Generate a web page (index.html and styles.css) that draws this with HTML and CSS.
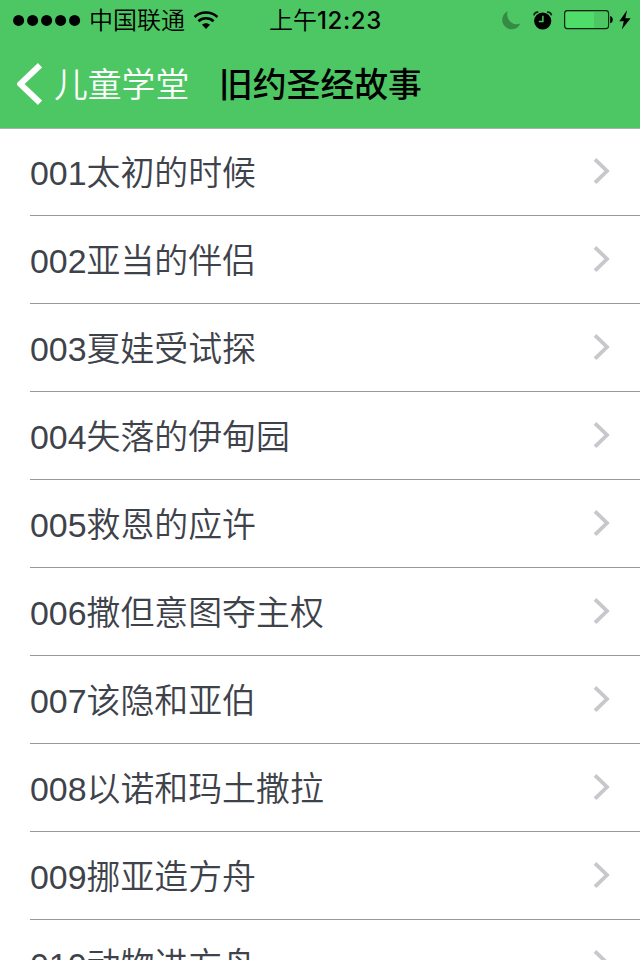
FILE: index.html
```
<!DOCTYPE html>
<html lang="zh-CN">
<head>
    <meta charset="UTF-8">
    <meta name="viewport" content="width=device-width, initial-scale=1.0">
    <title>旧约圣经故事</title>
    <link rel="stylesheet" href="styles.css">
</head>
<body>
    <header class="header">
        <div class="status">
            <div class="carrier">
                <svg class="signal" width="68" height="12" viewBox="0 0 68 12">
                    <circle cx="5.6" cy="6.4" r="5.5"/>
                    <circle cx="19.6" cy="6.4" r="5.5"/>
                    <circle cx="33.6" cy="6.4" r="5.5"/>
                    <circle cx="47.6" cy="6.4" r="5.5"/>
                    <circle cx="61.6" cy="6.4" r="5.5"/>
                </svg>
                <span class="label">中国联通</span>
                <svg class="wifi" width="26" height="18" viewBox="0 0 26 18">
                    <path d="M1.6 6C8 0 18 0 24.4 6M5.4 10.2c4.2-3.9 11-3.9 15.2 0" fill="none" stroke="#000" stroke-width="2.6"/>
                    <path d="M9 13.7c2.4-2 5.6-2 8 0L13 18z"/>
                </svg>
            </div>
            <div class="time label">上午<span class="digits">12:23</span></div>
            <div class="indicators">
                <svg class="moon" width="19" height="19" viewBox="0 0 19 19">
                    <path d="M5.8 0.3A9.4 9.4 0 1 0 18.3 12.5A9.6 9.6 0 0 1 5.8 0.3z"/>
                </svg>
                <svg class="alarm" width="20" height="19" viewBox="0 0 20 19">
                    <circle cx="9.7" cy="10" r="8.6"/>
                    <path d="M1 4.4C1.3 2 3.1 0.9 5.3 1.3M18.4 4.4C18.1 2 16.3 0.9 14.1 1.3" fill="none" stroke="#06240b" stroke-width="1.7"/>
                    <path d="M9.9 4.8v5.8H5.8" fill="none" stroke="#4dc763" stroke-width="1.5"/>
                </svg>
                <svg class="battery" width="50" height="20" viewBox="0 0 50 20">
                    <rect x="2" y="2" width="28" height="16" fill="#50dc68"/>
                    <rect x="0.6" y="0.6" width="44" height="18" rx="2.8" fill="none" stroke="#06240b" stroke-width="1.1"/>
                    <path d="M46.2 6c3.4 0.6 3.4 6.6 0 7.2z"/>
                </svg>
                <svg class="bolt" width="12" height="20" viewBox="0 0 12 20">
                    <path d="M8 0.3L0.3 11.3h4.5L2.8 19.4L11.6 8.2H6.4z"/>
                </svg>
            </div>
        </div>
        <nav class="navbar">
            <a class="back" href="#">
                <svg width="26" height="42" viewBox="0 0 26 42">
                    <path d="M23 2.2L3.2 21L23 39.8" fill="none" stroke="#fff" stroke-width="6"/>
                </svg>
                <span class="label">儿童学堂</span>
            </a>
            <h1 class="title label">旧约圣经故事</h1>
        </nav>
    </header>

    <ul class="list">
        <li><span class="label">001太初的时候</span><svg class="arrow" viewBox="0 0 18 28"><path d="M2 2.3L14 14L2 25.7"/></svg></li>
        <li><span class="label">002亚当的伴侣</span><svg class="arrow" viewBox="0 0 18 28"><path d="M2 2.3L14 14L2 25.7"/></svg></li>
        <li><span class="label">003夏娃受试探</span><svg class="arrow" viewBox="0 0 18 28"><path d="M2 2.3L14 14L2 25.7"/></svg></li>
        <li><span class="label">004失落的伊甸园</span><svg class="arrow" viewBox="0 0 18 28"><path d="M2 2.3L14 14L2 25.7"/></svg></li>
        <li><span class="label">005救恩的应许</span><svg class="arrow" viewBox="0 0 18 28"><path d="M2 2.3L14 14L2 25.7"/></svg></li>
        <li><span class="label">006撒但意图夺主权</span><svg class="arrow" viewBox="0 0 18 28"><path d="M2 2.3L14 14L2 25.7"/></svg></li>
        <li><span class="label">007该隐和亚伯</span><svg class="arrow" viewBox="0 0 18 28"><path d="M2 2.3L14 14L2 25.7"/></svg></li>
        <li><span class="label">008以诺和玛土撒拉</span><svg class="arrow" viewBox="0 0 18 28"><path d="M2 2.3L14 14L2 25.7"/></svg></li>
        <li><span class="label">009挪亚造方舟</span><svg class="arrow" viewBox="0 0 18 28"><path d="M2 2.3L14 14L2 25.7"/></svg></li>
        <li><span class="label">010动物进方舟</span><svg class="arrow" viewBox="0 0 18 28"><path d="M2 2.3L14 14L2 25.7"/></svg></li>
    </ul>
</body>
</html>
```
FILE: styles.css
```
* {
    box-sizing: border-box;
}

body {
    margin: 0;
    height: 960px;
    overflow: hidden;
    display: flex;
    flex-direction: column;
    font-family: "Liberation Sans", "Noto Sans CJK SC", sans-serif;
    background-color: #fff;
}

svg {
    display: block;
    flex: none;
}

.label {
    padding-top: 3px;
    line-height: 1.2;
}

.header {
    flex: none;
    height: 128px;
    background-color: #4dc763;
}

.status {
    display: grid;
    grid-template-columns: 269px 1fr auto;
    align-items: center;
    height: 40px;
    padding-right: 9px;
    font-size: 24px;
    font-weight: 350;
    color: #000;
}

.carrier {
    display: flex;
    align-items: center;
    padding-left: 13px;
}

.signal {
    margin-right: 8px;
}

.wifi {
    margin-left: 8px;
}

.digits {
    font-family: Inter, sans-serif;
    font-weight: 500;
    letter-spacing: 0.6px;
}

.indicators {
    display: flex;
    align-items: center;
}

.moon {
    margin-right: 12px;
    fill: #358b45;
}

.alarm {
    margin-right: 11px;
}

.battery {
    margin-right: 5px;
}

.navbar {
    display: flex;
    align-items: center;
    height: 88px;
    padding-left: 17px;
    font-size: 33.8px;
}

.back {
    display: flex;
    align-items: center;
    gap: 11px;
    width: 202px;
    font-weight: 350;
    color: #fff;
    text-decoration: none;
}

.title {
    margin: 0;
    font-size: inherit;
    font-weight: 500;
    color: #000;
}

.list {
    flex: none;
    margin: 0;
    padding: 0 0 0 30px;
    list-style: none;
    box-shadow: inset 0 1px #a9b5ab;
}

.list li {
    display: flex;
    align-items: center;
    justify-content: space-between;
    height: 88px;
    padding-right: 29px;
    border-bottom: 1px solid #98989b;
    font-size: 33.9px;
    font-weight: 350;
    color: #3e424b;
}

.arrow {
    width: 18px;
    height: 28px;
    margin-bottom: 1px;
    fill: none;
    stroke: #c7c7cc;
    stroke-width: 3.8;
}
```
